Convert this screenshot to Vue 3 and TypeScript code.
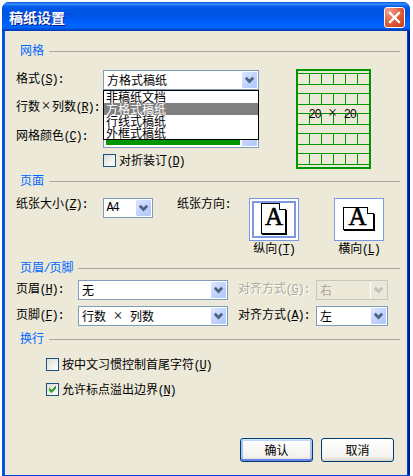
<script setup lang="ts">
import { ref } from 'vue'

const formats: string[] = ['非稿纸文档', '方格式稿纸', '行线式稿纸', '外框式稿纸']
const selected = ref(1)
const noFirstLast = ref(false)
const overflowPunct = ref(true)
const foldBinding = ref(false)
const bands: number[] = [4, 24, 44, 64, 84]
const columns: number[] = [13, 25, 37, 49, 61]
</script>

<template>
  <div class="dialog">
    <header class="titlebar">
      <span class="title">稿纸设置</span>
      <button class="close" aria-label="关闭">
        <svg width="21" height="21" viewBox="0 0 21 21"><path d="M6 6L15 15M15 6L6 15" stroke="#fff" stroke-width="2.3" stroke-linecap="square" /></svg>
      </button>
    </header>

    <main class="body">
      <section class="grid-section">
        <h2><span>网格</span></h2>
        <div class="columns">
          <div class="fields">
            <div class="row">
              <label>格式<span class="k">(<u>S</u>):</span></label>
              <div class="select wide">
                <span>方格式稿纸</span>
                <i class="arrow"><svg width="15" height="16" viewBox="0 0 15 16"><path d="M3.8 5.8L7.5 9.5L11.2 5.8" /></svg></i>
                <ul class="list">
                  <li v-for="(f, i) in formats" :key="f" :class="{ on: i === selected }" @click="selected = i">{{ f }}</li>
                </ul>
              </div>
            </div>
            <div class="row"><label>行数<span class="w">×</span>列数<span class="k">(<u>R</u>):</span></label></div>
            <div class="row">
              <label>网格颜色<span class="k">(<u>C</u>):</span></label>
              <div class="select wide color"><b class="swatch"></b><i class="arrow"></i></div>
            </div>
            <div class="check fold" @click="foldBinding = !foldBinding">
              <i class="box"></i><span>对折装订<span class="k">(<u>D</u>)</span></span>
            </div>
          </div>
          <div class="preview">
            <svg width="75" height="100" viewBox="0 0 75 100" shape-rendering="crispEdges">
              <rect x="1" y="1" width="73" height="98" fill="none" stroke="#009600" stroke-width="2" />
              <g v-for="y in bands" :key="y" fill="#009600">
                <rect x="1" :y="y" width="73" height="1" />
                <rect x="1" :y="y + 11" width="73" height="1" />
                <rect v-for="x in columns" :key="x" :x="x" :y="y" width="1" height="12" />
              </g>
            </svg>
            <span class="count"><span class="k">20</span><span class="w apart">×</span><span class="k">20</span></span>
          </div>
        </div>
      </section>

      <section class="page-section">
        <h2><span>页面</span></h2>
        <div class="page-row">
          <label class="size">纸张大小<span class="k">(<u>Z</u>):</span></label>
          <div class="select paper">
            <span class="k">A4</span>
            <i class="arrow"><svg width="15" height="16" viewBox="0 0 15 16"><path d="M3.8 5.8L7.5 9.5L11.2 5.8" /></svg></i>
          </div>
          <label class="dir">纸张方向<span class="k">:</span></label>
          <div class="orient chosen">
            <div class="tile">
              <svg width="48" height="41" viewBox="0 0 48 41" shape-rendering="crispEdges">
                <rect x="3" y="3" width="42" height="35" fill="#fff" stroke="#7b98e0" stroke-width="2" />
                <path d="M11.5 4.5H29.5L35.5 10.5V34.5H11.5Z" fill="#fff" stroke="#000" />
                <path d="M36 11V35H12" fill="none" stroke="#000" stroke-width="2" />
                <path d="M29.5 4.5V10.5H35.5" fill="#fff" stroke="#000" />
              </svg>
              <span class="letter">A</span>
            </div>
            <span>纵向<span class="k">(<u>T</u>)</span></span>
          </div>
          <div class="orient second">
            <div class="tile">
              <svg width="48" height="41" viewBox="0 0 48 41" shape-rendering="crispEdges">
                <path d="M8.5 8.5H32.5L38.5 14.5V30.5H8.5Z" fill="#fff" stroke="#000" />
                <path d="M39 15V31H9" fill="none" stroke="#000" stroke-width="2" />
                <path d="M32.5 8.5V14.5H38.5" fill="#fff" stroke="#000" />
              </svg>
              <span class="letter">A</span>
            </div>
            <span>横向<span class="k">(<u>L</u>)</span></span>
          </div>
        </div>
      </section>

      <section class="header-section">
        <h2><span>页眉<span class="k">/</span>页脚</span></h2>
        <div class="hf">
          <label>页眉<span class="k">(<u>H</u>):</span></label>
          <div class="select"><span>无</span><i class="arrow"><svg width="15" height="16" viewBox="0 0 15 16"><path d="M3.8 5.8L7.5 9.5L11.2 5.8" /></svg></i></div>
          <label class="align off">对齐方式<span class="k">(<u>G</u>):</span></label>
          <div class="select disabled"><span>右</span><i class="arrow"><svg width="15" height="16" viewBox="0 0 15 16"><path d="M3.8 5.8L7.5 9.5L11.2 5.8" /></svg></i></div>
        </div>
        <div class="hf">
          <label>页脚<span class="k">(<u>F</u>):</span></label>
          <div class="select"><span>行数<span class="w apart">×</span>列数</span><i class="arrow"><svg width="15" height="16" viewBox="0 0 15 16"><path d="M3.8 5.8L7.5 9.5L11.2 5.8" /></svg></i></div>
          <label class="align">对齐方式<span class="k">(<u>A</u>):</span></label>
          <div class="select"><span>左</span><i class="arrow"><svg width="15" height="16" viewBox="0 0 15 16"><path d="M3.8 5.8L7.5 9.5L11.2 5.8" /></svg></i></div>
        </div>
      </section>

      <section class="wrap-section">
        <h2><span>换行</span></h2>
        <div class="checks">
          <div class="check" @click="noFirstLast = !noFirstLast">
            <i class="box"><svg v-if="noFirstLast" width="11" height="11" viewBox="0 0 11 11"><path d="M2 3.5L4.5 6L9 1.5V4.5L4.5 9L2 6.5Z" fill="#21a121" /></svg></i>
            <span>按中文习惯控制首尾字符<span class="k">(<u>U</u>)</span></span>
          </div>
          <div class="check" @click="overflowPunct = !overflowPunct">
            <i class="box"><svg v-if="overflowPunct" width="11" height="11" viewBox="0 0 11 11"><path d="M2 3.5L4.5 6L9 1.5V4.5L4.5 9L2 6.5Z" fill="#21a121" /></svg></i>
            <span>允许标点溢出边界<span class="k">(<u>N</u>)</span></span>
          </div>
        </div>
      </section>

      <footer>
        <button class="btn primary">确认</button>
        <button class="btn">取消</button>
      </footer>
    </main>
  </div>
</template>

<style>
body {
  background: #fff;
  overflow: hidden;
}
</style>

<style scoped>
* {
  box-sizing: border-box;
}
.dialog {
  width: 408px;
  height: 474px;
  margin: 2px 0 0 2px;
  display: flex;
  flex-direction: column;
  border-radius: 7px 7px 0 0;
  overflow: hidden;
  background: #0046e0;
  font: 12px/12px "Noto Sans CJK SC", sans-serif;
  color: #000;
  white-space: nowrap;
}
.titlebar {
  height: 29px;
  flex: none;
  display: flex;
  align-items: center;
  justify-content: space-between;
  padding: 0 5px 0 7px;
  background: linear-gradient(#0050d8 0, #3a93ff 2px, #0a62ee 4px, #0055e5 7px, #0054e3 13px, #005dfa 19px, #0066ff 24px, #0062f5 26px, #0040bd 28px, #0038b8 29px);
}
.title {
  font-size: 14px;
  line-height: 14px;
  font-weight: 700;
  color: #fff;
  text-shadow: 1px 1px 0 #0a1883;
}
.close {
  width: 21px;
  height: 21px;
  margin: 2px 0 0;
  padding: 0;
  border: 1px solid #fff;
  border-radius: 3px;
  background: radial-gradient(circle at 20% 15%, #f0a08b, #e0603c 50%, #c93a12 100%);
  display: flex;
  align-items: center;
  justify-content: center;
}
.close svg {
  flex: none;
}
.body {
  flex: 1;
  margin: 0 3px 1px;
  background: #ece9d8;
  box-shadow: -3px 0 0 #0054e8, 1px 0 0 #003dd6, 3px 0 0 #001ba0;
  display: flex;
  flex-direction: column;
  padding-top: 12px;
}
.k {
  font-family: "Liberation Mono", monospace;
  letter-spacing: -1.2px;
  margin-left: -0.6px;
}
.w {
  display: inline-block;
  width: 12px;
  text-align: center;
  font-family: "Liberation Serif", serif;
  font-size: 16px;
}
.apart {
  margin: 0 6px;
}
u {
  text-underline-offset: 1px;
  text-decoration-thickness: 1px;
  text-decoration-skip-ink: none;
}
h2 {
  margin: 0 7px 0 15px;
  height: 14px;
  font-size: 12px;
  line-height: 14px;
  font-weight: 400;
  color: #0066ff;
  display: flex;
  gap: 5px;
}
h2::after {
  content: "";
  flex: 1;
  height: 1px;
  margin-top: 8px;
  background: #aca899;
}
.grid-section {
  height: 130px;
}
.columns {
  display: flex;
  margin: 13px 0 0 11px;
}
.fields {
  width: 280px;
}
.row {
  display: flex;
  height: 20px;
  align-items: center;
  margin-bottom: 8px;
}
.row:nth-child(3) {
  height: 22px;
}
.row label {
  width: 87px;
  margin-top: -2px;
}
.select {
  position: relative;
  height: 20px;
  border: 1px solid #7f9db9;
  background: #fff;
  display: flex;
  align-items: center;
  justify-content: space-between;
  padding: 0 1px 0 3px;
}
.wide {
  width: 156px;
}
.color {
  height: 22px;
  padding-left: 2px;
}
.swatch {
  width: 134px;
  height: 16px;
  background: #009600;
}
.arrow {
  width: 15px;
  height: 16px;
  flex: none;
  border-radius: 1px;
  background: linear-gradient(135deg, #dce7ff, #c3d3fd 50%, #b0c8fa);
}
.color .arrow {
  height: 18px;
}
.arrow svg {
  display: block;
}
.arrow path {
  fill: none;
  stroke: #4d6185;
  stroke-width: 2.7;
}
.list {
  position: absolute;
  left: -1px;
  top: 19px;
  width: 156px;
  margin: 0;
  padding: 0;
  border: 1px solid #000;
  background: #fff;
  list-style: none;
  z-index: 2;
}
.list li {
  height: 12px;
  line-height: 12px;
  padding-left: 2px;
}
.list .on {
  background: #808080;
  color: #fff;
}
.check {
  display: flex;
  align-items: center;
  gap: 3px;
  height: 13px;
}
.fold {
  margin: -2px 0 0 87px;
}
.box {
  width: 13px;
  height: 13px;
  border: 1px solid #1c5180;
  background: linear-gradient(135deg, #dcdcd7, #fff);
}
.box svg {
  display: block;
}
.preview {
  position: relative;
  width: 75px;
  height: 100px;
  margin-top: -1px;
}
.preview svg {
  display: block;
}
.count {
  position: absolute;
  left: 13px;
  top: 38px;
}
.page-section {
  height: 87px;
}
.page-row {
  display: flex;
  align-items: flex-start;
  margin: 11px 0 0 11px;
}
.page-row label {
  margin-top: -1px;
}
.size {
  width: 87px;
}
.paper {
  width: 50px;
}
.dir {
  width: 72px;
  margin-left: 24px;
}
.orient {
  width: 50px;
  text-align: center;
}
.tile {
  position: relative;
  height: 43px;
  border: 1px solid #7b98e0;
  background: #fff;
  margin-bottom: 1px;
}
.tile svg {
  display: block;
}
.letter {
  position: absolute;
  inset: 3px 0 auto 0;
  font: 25px/30px "Liberation Serif", serif;
  -webkit-text-stroke: 0.6px #000;
}
.second .letter {
  inset: 3px 3px auto 0;
}
.second {
  margin-left: 35px;
}
.header-section {
  height: 71px;
}
.hf {
  display: grid;
  grid-template-columns: 62px 150px 10px 78px 72px;
  align-items: center;
  margin: 6px 0 0 11px;
}
.hf label {
  margin-top: -2px;
}
.align {
  grid-column: 4;
}
.off {
  color: #aca899;
  text-shadow: 1px 1px 0 #fff;
}
.disabled {
  background: #ece9d8;
  border-color: #c9c7ba;
  color: #aca899;
}
.disabled .arrow {
  background: #e9e7dc;
  box-shadow: -1px 0 0 #fff;
}
.disabled .arrow path {
  stroke: #c4c2b6;
}
.wrap-section {
  height: 69px;
}
.checks {
  display: flex;
  flex-direction: column;
  gap: 12px;
  margin: 13px 0 0 41px;
}
footer {
  display: flex;
  gap: 8px;
  justify-content: flex-end;
  margin: 38px 13px 0 0;
}
.btn {
  width: 73px;
  height: 24px;
  padding: 0 0 1px;
  border: 1px solid #003c74;
  border-radius: 3px;
  background: linear-gradient(#fff, #f3f2ec 80%, #d9d3c5);
  font: inherit;
  color: #000;
}
.primary {
  box-shadow: inset 0 1px 0 #cee7ff, inset 0 -2px 0 #6982ee, inset 2px 0 0 #a9c1f3, inset -2px 0 0 #a9c1f3, inset 0 2px 0 #bcd4f6;
}
</style>
